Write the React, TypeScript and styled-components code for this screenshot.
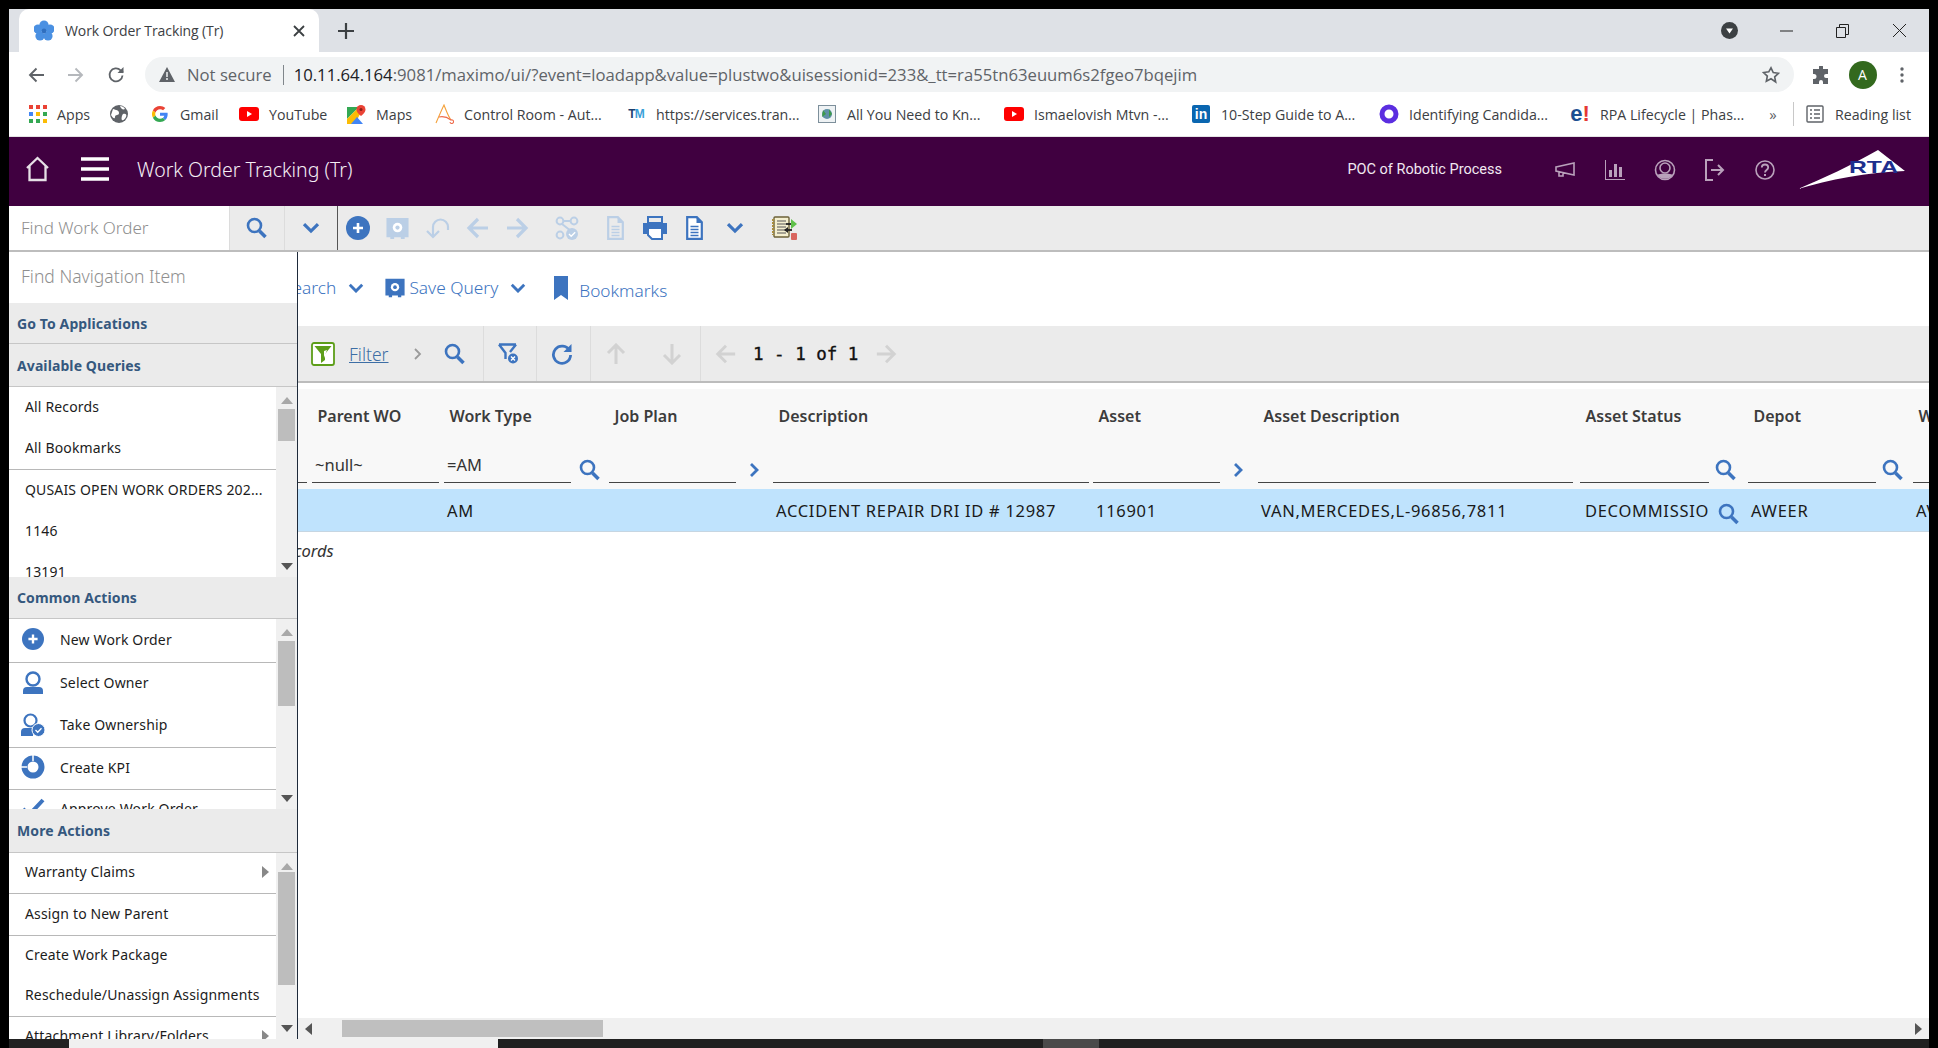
import React from "react";
import styled, { createGlobalStyle } from "styled-components";

const BLUE = "#3d74bf";
const FADE = "#bbcfe6";
const PLEX = `"Noto Sans", "Open Sans", sans-serif`;
const CHROME = `"Open Sans", "Noto Sans", sans-serif`;

const Global = createGlobalStyle`
  html, body { margin: 0; padding: 0; background: #000; overflow: hidden; }
  * { box-sizing: border-box; }
  svg { display: block; flex: none; }
`;

const Frame = styled.div`
  width: 1938px;
  height: 1048px;
  padding: 9px 9px 0;
  background: #000;
  display: flex;
  flex-direction: column;
  overflow: hidden;
`;

/* ---------- browser chrome ---------- */
const TabStrip = styled.div`
  height: 43px;
  flex: none;
  background: #dee1e6;
  display: flex;
  align-items: flex-end;
  padding-left: 10px;
`;
const Tab = styled.div`
  width: 300px;
  height: 43px;
  background: #fff;
  border-radius: 10px 10px 0 0;
  display: flex;
  align-items: center;
  padding: 0 14px 0 15px;
  font: 14px ${CHROME};
  color: #3c4043;
  letter-spacing: -0.1px;
`;
const TabTitle = styled.span`
  margin-left: 11px;
  flex: 1;
  white-space: nowrap;
`;
const NewTab = styled.div`
  width: 40px;
  height: 43px;
  margin-left: 7px;
  display: flex;
  align-items: center;
  justify-content: center;
  color: #3c4043;
`;
const WindowControls = styled.div`
  margin-left: auto;
  height: 43px;
  display: flex;
  align-items: center;
  color: #3c4043;
`;
const WinSlot = styled.div<{ $w: number }>`
  width: ${(p) => p.$w}px;
  display: flex;
  justify-content: center;
`;

const AddressRow = styled.div`
  height: 40px;
  flex: none;
  background: #fff;
  display: flex;
  align-items: flex-end;
  color: #5f6368;
`;
const NavSlot = styled.div<{ $w: number }>`
  width: ${(p) => p.$w}px;
  height: 35px;
  flex: none;
  display: flex;
  align-items: center;
  justify-content: center;
`;
const Omnibox = styled.div`
  width: 1649px;
  height: 35px;
  margin-left: 2px;
  flex: none;
  border-radius: 18px;
  background: #f1f3f4;
  display: flex;
  align-items: center;
  padding-left: 14px;
  font: 16.7px ${CHROME};
  color: #5f6368;
  white-space: nowrap;
`;
const NotSecure = styled.span`
  margin-left: 12px;
`;
const OmniSep = styled.span`
  width: 1px;
  height: 20px;
  background: #80868b;
  margin: 0 10px 0 11px;
`;
const UrlHost = styled.span`
  color: #202124;
`;
const StarSlot = styled.div`
  margin-left: auto;
  margin-right: 14px;
  color: #5f6368;
`;
const Avatar = styled.div`
  width: 28px;
  height: 28px;
  border-radius: 50%;
  background: #33691e;
  color: #fff;
  font: 14px ${CHROME};
  display: flex;
  align-items: center;
  justify-content: center;
`;

const BookmarkBar = styled.div`
  height: 45px;
  flex: none;
  background: #fff;
  display: flex;
  align-items: center;
  padding-left: 19px;
  border-bottom: 1px solid #e4e4e4;
  font: 14.2px ${CHROME};
  color: #3c4043;
  white-space: nowrap;
`;
const Bookmark = styled.div<{ $w: number; $gap?: number }>`
  width: ${(p) => p.$w}px;
  flex: none;
  display: flex;
  align-items: center;
  gap: ${(p) => p.$gap ?? 10}px;
`;
const IconBox = styled.div`
  width: 20px;
  height: 20px;
  flex: none;
  display: flex;
  align-items: center;
  justify-content: center;
`;
const TmMark = styled.span`
  font: 700 12px "Liberation Sans", sans-serif;
  letter-spacing: -1px;
  color: #1d3f6e;
`;
const TmBlue = styled.span`
  color: #3aa0d8;
`;
const InMark = styled.span`
  width: 18px;
  height: 18px;
  background: #0a66b0;
  color: #fff;
  font: 700 14px/18px "Liberation Sans", sans-serif;
  text-align: center;
  border-radius: 2px;
`;
const EMark = styled.span`
  font: 700 22px/20px "Liberation Sans", sans-serif;
  color: #1d4f91;
`;
const EBang = styled.span`
  color: #e53935;
`;
const MoreChevrons = styled.span`
  width: 20px;
  text-align: center;
  font-size: 15px;
  color: #5f6368;
`;
const BarSep = styled.span`
  width: 1px;
  height: 24px;
  background: #c8c8c8;
  margin: 0 11px 0 10px;
`;

/* ---------- maximo header ---------- */
const AppHeader = styled.div`
  height: 69px;
  flex: none;
  background: #400040;
  display: flex;
  align-items: center;
  color: #fff;
`;
const HomeSlot = styled.div`
  margin-left: 16px;
  margin-bottom: 6px;
`;
const BurgerSlot = styled.div`
  margin-left: 31px;
  margin-bottom: 6px;
`;
const AppTitle = styled.div`
  margin-left: 28px;
  font: 300 19.5px ${PLEX};
  margin-bottom: 4px;
  color: #f5eef5;
  white-space: nowrap;
`;
const OrgName = styled.div`
  margin-left: auto;
  margin-right: 38px;
  margin-bottom: 4px;
  font: 14.5px Roboto, sans-serif;
  color: #f1e8f1;
  white-space: nowrap;
`;
const HeadIcons = styled.div`
  display: flex;
  align-items: center;
  gap: 0;
  color: #b9a1bb;
  margin-bottom: 4px;
`;
const HeadSlot = styled.div`
  width: 50px;
  display: flex;
  justify-content: center;
`;
const LogoSlot = styled.div`
  margin-left: 8px;
  margin-right: 23px;
  margin-bottom: 4px;
`;
const LogoText = styled.text`
  font: 700 17px "Liberation Sans", sans-serif;
  fill: #1d2f8e;
`;

/* ---------- app toolbar ---------- */
const AppToolbar = styled.div`
  height: 46px;
  flex: none;
  background: #ebebeb;
  border-bottom: 2px solid #bdbdbd;
  display: flex;
  align-items: center;
`;
const FindBox = styled.div`
  width: 220px;
  height: 44px;
  background: #fff;
  padding: 0 0 2px 12px;
  display: flex;
  align-items: center;
  font: 300 17px ${PLEX};
  color: #8e8e8e;
  flex: none;
`;
const ToolCell = styled.div<{ $w: number; $line?: string }>`
  width: ${(p) => p.$w}px;
  height: 44px;
  flex: none;
  display: flex;
  align-items: center;
  justify-content: center;
  padding-right: 1px;
  border-left: 1px solid #dcdcdc;
  border-right: ${(p) => (p.$line ? `1px solid ${p.$line}` : "none")};
`;
const ToolIcon = styled.div<{ $w: number }>`
  width: ${(p) => p.$w}px;
  flex: none;
  display: flex;
  justify-content: center;
`;
const ToolIcons = styled.div`
  display: flex;
  align-items: center;
`;

/* ---------- workspace ---------- */
const Workspace = styled.div`
  position: relative;
  flex: 1;
  min-height: 0;
  background: #fff;
  overflow: hidden;
`;
const Main = styled.div`
  height: 100%;
  display: flex;
  flex-direction: column;
`;
const QueryBar = styled.div`
  height: 74px;
  flex: none;
  display: flex;
  align-items: center;
  padding: 0 0 2px 189px;
  font: 300 17.3px ${PLEX};
  color: ${BLUE};
  white-space: nowrap;
`;
const QueryLabel = styled.span<{ $drop?: number }>`
  position: relative;
  top: ${(p) => p.$drop ?? -1}px;
  margin-left: ${(p) => (p.$drop ? 11 : 4)}px;
`;
const QueryIcon = styled.div<{ $ml: number }>`
  margin-left: ${(p) => p.$ml}px;
`;

const FilterBar = styled.div`
  height: 57px;
  flex: none;
  background: #ebebeb;
  border-bottom: 2px solid #bcbcbc;
  display: flex;
  align-items: stretch;
  padding-left: 302px;
`;
const FilterGroup = styled.div<{ $w: number; $pl?: number; $end?: boolean }>`
  width: ${(p) => p.$w}px;
  flex: none;
  display: flex;
  align-items: center;
  padding-left: ${(p) => p.$pl ?? 0}px;
  border-right: ${(p) => (p.$end ? "none" : "1px solid #dcdcdc")};
`;
const FilterLink = styled.span`
  margin-left: 14px;
  margin-right: 25px;
  font: 300 17.5px ${PLEX};
  color: #3d6ea5;
  text-decoration: underline;
`;
const FilterChevron = styled.div`
  margin-right: 22px;
  color: #9a9a9a;
`;
const Pager = styled.span`
  margin: 0 17px 0 16px;
  font: 500 17.5px "DejaVu Sans Mono", monospace;
  -webkit-text-stroke: 0.35px #111;
  color: #111;
  white-space: nowrap;
`;
const GroupGap = styled.div<{ $w: number }>`
  width: ${(p) => p.$w}px;
  flex: none;
`;

const TableScroll = styled.div`
  flex: 1;
  min-height: 0;
  margin-top: 6px;
  display: flex;
  flex-direction: column;
  overflow: hidden;
`;
const HeadBlock = styled.div`
  height: 100px;
  flex: none;
  background: #f8f8f8;
`;
const ColGrid = styled.div<{ $h: number }>`
  height: ${(p) => p.$h}px;
  display: grid;
  grid-template-columns: 289px 14px 132px 165px 164px 320px 165px 322px 168px 165px 200px;
`;
const HeadCell = styled.div`
  padding: 0 0 2px 5.5px;
  display: flex;
  align-items: center;
  height: 55px;
  font: 600 16px ${PLEX};
  color: #3c3c3c;
  white-space: nowrap;
`;
const FilterCell = styled.div<{ $line: number }>`
  position: relative;
  height: 45px;
  padding: 0 0 4px 3px;
  display: flex;
  align-items: center;
  font: 16.5px ${PLEX};
  color: #333;
  &::after {
    content: "";
    position: absolute;
    left: 0;
    bottom: 6px;
    height: 1px;
    width: ${(p) => p.$line}px;
    background: #444;
  }
`;
const CellIcon = styled.div<{ $x: number; $y?: number }>`
  position: absolute;
  left: ${(p) => p.$x}px;
  top: ${(p) => p.$y ?? 15}px;
`;
const DataRow = styled(ColGrid)`
  flex: none;
  background: #bfe3fd;
  border-bottom: 1px solid #c6d6e2;
`;
const DataCell = styled.div<{ $dx?: number }>`
  position: relative;
  padding-left: ${(p) => p.$dx ?? 3}px;
  display: flex;
  align-items: center;
  font: 16.5px ${PLEX};
  letter-spacing: 0.7px;
  color: #1a1a1a;
  white-space: nowrap;
`;
const Clip = styled.span<{ $w: number }>`
  width: ${(p) => p.$w}px;
  overflow: hidden;
`;
const RowIcon = styled.div`
  position: absolute;
  left: 138px;
  top: 14px;
`;
const Records = styled.div`
  flex: none;
  height: 36px;
  padding-left: 254px;
  display: flex;
  align-items: center;
  font: italic 16.5px ${PLEX};
  color: #333;
`;
const Spacer = styled.div`
  flex: 1;
`;
const HScroll = styled.div`
  height: 21px;
  flex: none;
  background: #f0f0f0;
  margin-left: 289px;
  display: flex;
  align-items: center;
  padding: 0 6px 0 6px;
`;
const HThumb = styled.div`
  width: 261px;
  height: 17px;
  margin-left: 29px;
  background: #bfbfbf;
`;
const HEnd = styled.div`
  margin-left: auto;
`;

/* ---------- flyout navigation ---------- */
const Flyout = styled.nav`
  position: absolute;
  left: 0;
  top: 0;
  width: 289px;
  height: 100%;
  background: #fff;
  border-right: 1px solid #1e2a3a;
  display: flex;
  flex-direction: column;
  font: 14px ${PLEX};
  letter-spacing: 0.15px;
  color: #1c1c1c;
`;
const FlyFind = styled.div`
  height: 51px;
  flex: none;
  padding: 0 0 3px 12px;
  display: flex;
  align-items: center;
  font: 300 17.5px ${PLEX};
  letter-spacing: 0;
  color: #8f8f8f;
`;
const SectionHead = styled.div<{ $h: number }>`
  height: ${(p) => p.$h}px;
  flex: none;
  background: #ebebeb;
  border-bottom: 1px solid #c6c6c6;
  padding-left: 8px;
  display: flex;
  align-items: center;
  font: 700 14px ${PLEX};
  letter-spacing: 0.1px;
  color: #35587e;
  white-space: nowrap;
`;
const SectionBody = styled.div<{ $h: number }>`
  height: ${(p) => p.$h}px;
  flex: none;
  display: flex;
`;
const RowList = styled.div`
  flex: 1;
  min-width: 0;
  overflow: hidden;
`;
const NavRow = styled.div<{ $h: number; $sep?: boolean; $pl?: number }>`
  height: ${(p) => p.$h}px;
  display: flex;
  align-items: center;
  padding: 0 4px 3px ${(p) => p.$pl ?? 16}px;
  white-space: nowrap;
  border-bottom: ${(p) => (p.$sep ? "1px solid #b8b8b8" : "none")};
`;
const NavIcon = styled.div`
  width: 24px;
  margin-right: 15px;
  display: flex;
  justify-content: center;
`;
const SubArrow = styled.div`
  margin-left: auto;
  margin-right: 2px;
`;
const VScroll = styled.div`
  width: 21px;
  flex: none;
  background: #f0f0f0;
  display: flex;
  flex-direction: column;
  align-items: center;
  padding: 9px 0 6px;
`;
const VThumb = styled.div<{ $top: number; $h: number }>`
  width: 17px;
  height: ${(p) => p.$h}px;
  margin-top: ${(p) => p.$top}px;
  background: #bdbdbd;
`;
const ArrowEnd = styled.div`
  margin-top: auto;
`;

const TaskStrip = styled.div`
  height: 9px;
  flex: none;
  margin: 0 -9px;
  display: flex;
  background: #000;
`;
const TaskPart = styled.div<{ $w: number; $c: string }>`
  width: ${(p) => p.$w}px;
  flex: none;
  background: ${(p) => p.$c};
`;

/* ---------- icons ---------- */
type IP = { c?: string; s?: number };
const Search = ({ c = BLUE, s = 22 }: IP) => (
  <svg width={s} height={s} viewBox="0 0 22 22" fill="none">
    <circle cx="8.5" cy="8.5" r="6.5" stroke={c} strokeWidth="2.6" />
    <path d="M13.5 14l6 6" stroke={c} strokeWidth="3.6" />
  </svg>
);
const Chevron = ({ c = BLUE, w = 18 }: IP & { w?: number }) => (
  <svg width={w} height={w * 0.62} viewBox="0 0 18 11" fill="none">
    <path d="M2 2l7 7 7-7" stroke={c} strokeWidth="3.2" />
  </svg>
);
const ChevronR = ({ c = BLUE }: IP) => (
  <svg width="10" height="16" viewBox="0 0 10 16" fill="none">
    <path d="M2 2l6 6-6 6" stroke={c} strokeWidth="2.8" />
  </svg>
);
const PlusCircle = ({ s = 24 }: IP) => (
  <svg width={s} height={s} viewBox="0 0 24 24">
    <circle cx="12" cy="12" r="12" fill={BLUE} />
    <path d="M12 7v10M7 12h10" stroke="#fff" strokeWidth="2.6" />
  </svg>
);
const Safe = ({ c = FADE, w = 23 }: IP & { w?: number }) => (
  <svg width={w} height={w} viewBox="0 0 23 24">
    <path d="M0 1h23v20h-4v2h-4v-2H8v2H4v-2H0z" fill={c} />
    <circle cx="11.5" cy="11" r="5" fill="#fff" />
    <circle cx="11.5" cy="11" r="2.2" fill={c} />
  </svg>
);
const Undo = () => (
  <svg width="24" height="24" viewBox="0 0 24 24" fill="none">
    <path d="M7 20V11a7.5 7.5 0 1 1 15 0v3" stroke={FADE} strokeWidth="2.2" />
    <path d="M1 15l6 6 6-6" stroke={FADE} strokeWidth="2.2" />
  </svg>
);
const ArrowH = ({ dir, c = FADE, s = 24 }: IP & { dir: "l" | "r" }) => (
  <svg width={s} height={s} viewBox="0 0 24 24" fill="none">
    <path d={dir === "l" ? "M22 12H4M12 3l-9 9 9 9" : "M2 12h18M12 3l9 9-9 9"} stroke={c} strokeWidth="3.2" />
  </svg>
);
const ArrowV = ({ dir }: { dir: "u" | "d" }) => (
  <svg width="20" height="22" viewBox="0 0 20 22" fill="none">
    <path d={dir === "u" ? "M10 21V3M2 10l8-8 8 8" : "M10 1v18M2 12l8 8 8-8"} stroke="#d2d2d2" strokeWidth="3" />
  </svg>
);
const Route = () => (
  <svg width="24" height="24" viewBox="0 0 24 24" fill="none">
    <circle cx="5" cy="5" r="3.4" stroke={FADE} strokeWidth="2" />
    <circle cx="19" cy="5" r="3.4" stroke={FADE} strokeWidth="2" />
    <circle cx="5" cy="19" r="3.4" stroke={FADE} strokeWidth="2" />
    <path d="M8.5 5h7M7 8l9 7" stroke={FADE} strokeWidth="2" />
    <circle cx="17" cy="18" r="6" fill={FADE} />
    <path d="M14 18l2.2 2.2 4-4" stroke="#fff" strokeWidth="1.4" />
  </svg>
);
const Doc = ({ c = FADE }: IP) => (
  <svg width="17" height="24" viewBox="0 0 17 24" fill="none">
    <path d="M1.2 1.2h9.6l5 5v16.6H1.2z" stroke={c} strokeWidth="2.2" fill={c === BLUE ? "#fff" : "none"} />
    <path d="M10.5 1v6h6" fill={c} />
    <path d="M4.5 10.5h8M4.5 13.5h8M4.5 16.5h8M4.5 19.5h8" stroke={c} strokeWidth="1.6" />
  </svg>
);
const Printer = () => (
  <svg width="24" height="24" viewBox="0 0 24 24">
    <path d="M5 1h14v6H5z" fill="none" stroke={BLUE} strokeWidth="2" />
    <path d="M0 7h24v11h-4V12H4v6H0z" fill={BLUE} />
    <path d="M5 12h14v11H9l-4-4z" fill="#fff" stroke={BLUE} strokeWidth="2" />
  </svg>
);
const LedgerMove = () => (
  <svg width="26" height="25" viewBox="0 0 26 25">
    <rect x="2" y="1" width="15" height="20" rx="1" fill="#f4efd0" stroke="#6c6238" strokeWidth="1.4" />
    <path d="M1 3v16" stroke="#a98d3d" strokeWidth="2" strokeDasharray="2 1" />
    <path d="M5 5h9M5 8h9M5 11h9M5 14h9M5 17h9" stroke="#555" strokeWidth="1.2" />
    <path d="M14 8h6" stroke="#222" strokeWidth="1.8" />
    <path d="M19 3l6 5-6 5z" fill="#5fc04a" />
    <path d="M20 14h-7" stroke="#222" strokeWidth="1.8" />
    <path d="M16 11l-4 3 4 3z" fill="#222" />
    <rect x="19" y="17" width="6" height="7" rx="1" fill="#d9655f" />
  </svg>
);
const FilterGreen = () => (
  <svg width="24" height="24" viewBox="0 0 24 24">
    <rect x="1" y="1" width="22" height="22" rx="2" fill="#fff" stroke="#5d9e19" strokeWidth="1.8" />
    <path d="M3.5 4h17l-6.5 8v6l-4 3v-9z" fill="#5d9e19" />
    <path d="M13 9l3-1-3 8z" fill="#fff" />
  </svg>
);
const FilterClear = () => (
  <svg width="22" height="22" viewBox="0 0 22 22" fill="none">
    <path d="M1 1.5h17M1 1.5l6.5 8.5v6M18 1.5L12 9" stroke={BLUE} strokeWidth="2.4" />
    <circle cx="15" cy="15.5" r="5" fill={BLUE} />
    <path d="M13 13.5l4 4M17 13.5l-4 4" stroke="#fff" strokeWidth="1.4" />
  </svg>
);
const Refresh = () => (
  <svg width="22" height="22" viewBox="0 0 22 22" fill="none">
    <path d="M18.5 7.5A8.6 8.6 0 1 0 19.6 12" stroke={BLUE} strokeWidth="2.8" />
    <path d="M20.5 1v8h-8z" fill={BLUE} />
  </svg>
);
const Bookmarked = () => (
  <svg width="14" height="24" viewBox="0 0 14 24">
    <path d="M0 0h14v24l-7-5-7 5z" fill={BLUE} />
  </svg>
);
const Tri = ({ d, c = "#555" }: { d: "u" | "d" | "l" | "r"; c?: string }) => {
  const p = { u: "M0 8L6 1l6 7z", d: "M0 1h12L6 8z", l: "M8 0v12L1 6z", r: "M1 0v12l7-6z" }[d];
  const w = d === "u" || d === "d" ? 12 : 9;
  const h = d === "u" || d === "d" ? 9 : 12;
  return (
    <svg width={w} height={h} viewBox={`0 0 ${w} ${h}`}>
      <path d={p} fill={c} />
    </svg>
  );
};
const Person = () => (
  <svg width="22" height="24" viewBox="0 0 22 24" fill="none">
    <circle cx="11" cy="8" r="6.5" stroke={BLUE} strokeWidth="2.4" />
    <path d="M1 23v-3a4 4 0 0 1 4-4h12a4 4 0 0 1 4 4v3z" fill={BLUE} />
  </svg>
);
const PersonCheck = () => (
  <svg width="24" height="24" viewBox="0 0 24 24" fill="none">
    <circle cx="9.5" cy="7.5" r="6" stroke={BLUE} strokeWidth="2.2" />
    <path d="M0 23v-4a4 4 0 0 1 4-4h8v8z" fill={BLUE} />
    <circle cx="17.5" cy="17" r="6.5" fill={BLUE} stroke="#fff" />
    <path d="M14.5 17l2.2 2.2 3.8-4" stroke="#fff" strokeWidth="1.3" />
  </svg>
);
const Donut = () => (
  <svg width="24" height="24" viewBox="0 0 24 24" fill="none">
    <circle cx="12" cy="12" r="8.5" stroke={BLUE} strokeWidth="6" />
    <path d="M0 12h6M12 0v6" stroke="#fff" strokeWidth="1.5" />
  </svg>
);
const Approve = () => (
  <svg width="24" height="24" viewBox="0 0 24 24" fill="none">
    <path d="M2 12l6 6L22 3" stroke={BLUE} strokeWidth="4" />
  </svg>
);

const Flower = () => (
  <svg width="20" height="22" viewBox="0 0 20 22">
    {[[10, 5], [4, 9], [16, 9], [6, 16], [14, 16]].map(([x, y]) => (
      <circle key={`${x}${y}`} cx={x} cy={y} r="4.6" fill="#4a90e2" />
    ))}
    <circle cx="10" cy="11" r="2.4" fill="#2f6fc0" />
  </svg>
);
const AppsGrid = () => (
  <svg width="18" height="18" viewBox="0 0 18 18">
    {["#ea4335", "#ea4335", "#ea4335", "#4285f4", "#fbbc05", "#34a853", "#34a853", "#34a853", "#fbbc05"].map((c, i) => (
      <rect key={i} x={(i % 3) * 7} y={Math.floor(i / 3) * 7} width="4" height="4" fill={c} />
    ))}
  </svg>
);
const Globe = () => (
  <svg width="18" height="18" viewBox="0 0 18 18">
    <circle cx="9" cy="9" r="9" fill="#5f6368" />
    <path d="M3 4c3 1 6 1 6 4s-4 1-4 4-3 0-4-2zM13 9c3-1 4 1 3 3s-3 4-4 3 0-5 1-6zM10 1c2 0 4 1 5 3-2 1-4 0-5-3z" fill="#fff" />
  </svg>
);
const GoogleG = () => (
  <svg width="16" height="16" viewBox="0 0 48 48">
    <path fill="#ea4335" d="M24 9.5c3.5 0 6.7 1.300 9.200 3.500l6.800-6.800C35.900 2.400 30.400 0 24 0 14.600 0 6.500 5.400 2.600 13.200l7.900 6.200C12.400 13.600 17.700 9.500 24 9.500z" />
    <path fill="#4285f4" d="M47 24.500c0-1.600-.1-3.100-.4-4.500H24v9h12.900c-.6 3-2.200 5.400-4.700 7.100l7.600 5.900C44.200 38 47 31.800 47 24.500z" />
    <path fill="#fbbc05" d="M10.500 28.600a14.500 14.500 0 0 1 0-9.200l-7.900-6.200a24 24 0 0 0 0 21.600z" />
    <path fill="#34a853" d="M24 48c6.500 0 11.900-2.100 15.800-5.800l-7.600-5.900c-2.100 1.400-4.900 2.300-8.200 2.300-6.300 0-11.600-4.200-13.500-9.900l-7.900 6.200C6.500 42.600 14.600 48 24 48z" />
  </svg>
);
const YouTube = () => (
  <svg width="20" height="14" viewBox="0 0 20 14">
    <rect width="20" height="14" rx="3" fill="#f00" />
    <path d="M8 4l5 3-5 3z" fill="#fff" />
  </svg>
);
const MapsPin = () => (
  <svg width="19" height="19" viewBox="0 0 19 19">
    <path d="M0 2h12l-12 12z" fill="#34a853" />
    <path d="M0 14L12 2l2 5-6 12H0z" fill="#fbbc05" />
    <path d="M4 19l6-7 6 7z" fill="#4285f4" />
    <path d="M14 0a4.500 4.500 0 0 1 4.500 4.500C18.500 8 14 11 14 11S9.500 8 9.500 4.500A4.500 4.500 0 0 1 14 0z" fill="#ea4335" />
    <circle cx="14" cy="4.500" r="1.500" fill="#8c1f16" />
  </svg>
);
const AutoA = () => (
  <svg width="19" height="20" viewBox="0 0 19 20" fill="none">
    <path d="M1 19C4 12 7 5 9 1c2 5 4 11 7 15" stroke="#f4a13a" strokeWidth="1.1" />
    <path d="M4 13c4-1 8 0 12 3a1.800 1.800 0 1 1-1 2" stroke="#ee6a4a" strokeWidth="1.1" />
  </svg>
);
const Photo = () => (
  <svg width="18" height="18" viewBox="0 0 18 18">
    <rect x=".5" y=".5" width="17" height="17" fill="#eef2f4" stroke="#7d8f9b" />
    <circle cx="9" cy="9" r="5" fill="#5f8fa6" />
    <path d="M5 5l3 4-4 3zM11 4l3 5-3 3z" fill="#3d9a4a" />
  </svg>
);
const Ring = () => (
  <svg width="20" height="20" viewBox="0 0 20 20" fill="none">
    <circle cx="10" cy="10" r="7" stroke="#5b2ee0" strokeWidth="5" />
  </svg>
);
const ListIcon = () => (
  <svg width="18" height="18" viewBox="0 0 18 18" fill="none" stroke="#5f6368" strokeWidth="1.4">
    <rect x="1" y="1" width="16" height="16" rx="1" />
    <path d="M4 5h2M8 5h6M4 9h2M8 9h6M4 13h2M8 13h6" />
  </svg>
);

const HomeIcon = () => (
  <svg width="25" height="26" viewBox="0 0 25 26" fill="none">
    <path d="M2 12L12.500 2 23 12M4.500 10v14h16V10" stroke="#e6e0e6" strokeWidth="2.300" />
  </svg>
);
const Burger = () => (
  <svg width="28" height="24" viewBox="0 0 28 24">
    <path d="M0 2h28M0 12h28M0 22h28" stroke="#fff" strokeWidth="3.400" />
  </svg>
);
const Bullhorn = () => (
  <svg width="20" height="16" viewBox="0 0 20 16" fill="none" stroke="currentColor" strokeWidth="1.600">
    <path d="M1 5l18-4v12L1 9zM4 10v4h4v-3" />
  </svg>
);
const BarsChart = () => (
  <svg width="20" height="20" viewBox="0 0 20 20" fill="currentColor">
    <path d="M0 0h1v19h19v1H0z" />
    <rect x="4" y="10" width="3" height="7" />
    <rect x="9" y="4" width="3" height="13" />
    <rect x="14" y="7" width="3" height="10" />
  </svg>
);
const UserRound = () => (
  <svg width="22" height="22" viewBox="0 0 22 22" fill="none">
    <circle cx="11" cy="11" r="9.500" stroke="currentColor" strokeWidth="1.600" />
    <circle cx="11" cy="9" r="5" stroke="currentColor" strokeWidth="1.600" />
    <path d="M3.500 16c2-2 13-2 15 0-2 5-13 5-15 0z" fill="currentColor" />
  </svg>
);
const ExitIcon = () => (
  <svg width="20" height="22" viewBox="0 0 20 22" fill="none" stroke="currentColor" strokeWidth="2">
    <path d="M8 1H1v20h7M6 11h12M13 6l5 5-5 5" />
  </svg>
);
const HelpIcon = () => (
  <svg width="20" height="20" viewBox="0 0 20 20" fill="none" stroke="currentColor" strokeWidth="1.600">
    <circle cx="10" cy="10" r="9" />
    <path d="M6.800 7.500c0-4 6.400-4 6.400 0 0 2.500-3.200 2.500-3.200 5" strokeWidth="1.800" />
    <path d="M10 14v2" strokeWidth="2" />
  </svg>
);
const RtaLogo = () => (
  <svg width="108" height="40" viewBox="0 0 108 40">
    <path d="M0 39C26 28 52 16 80 0l27 21C70 22 30 30 0 39z" fill="#fff" />
    <LogoText x="51" y="23" textLength="49" lengthAdjust="spacingAndGlyphs">RTA</LogoText>
  </svg>
);

export default function App() {
  return (
    <Frame>
      <Global />
      <TabStrip>
        <Tab>
          <IconBox><Flower /></IconBox>
          <TabTitle>Work Order Tracking (Tr)</TabTitle>
          <svg width="12" height="12" viewBox="0 0 12 12" stroke="#3c4043" strokeWidth="1.800"><path d="M1 1l10 10M11 1L1 11" /></svg>
        </Tab>
        <NewTab>
          <svg width="16" height="16" viewBox="0 0 16 16" stroke="#3c4043" strokeWidth="2.200"><path d="M8 0v16M0 8h16" /></svg>
        </NewTab>
        <WindowControls>
          <WinSlot $w={58}>
            <svg width="17" height="17" viewBox="0 0 17 17"><circle cx="8.500" cy="8.500" r="8.500" fill="#3c4043" /><path d="M5 6.500h7l-3.500 5z" fill="#fff" /></svg>
          </WinSlot>
          <WinSlot $w={56}>
            <svg width="13" height="2" viewBox="0 0 13 2"><path d="M0 1h13" stroke="#222" strokeWidth="1" /></svg>
          </WinSlot>
          <WinSlot $w={56}>
            <svg width="13" height="14" viewBox="0 0 13 14" fill="none" stroke="#222" strokeWidth="1"><path d="M.5 3.500h9v10h-9zM3.500 3.500v-3h9v10h-3" /></svg>
          </WinSlot>
          <WinSlot $w={59}>
            <svg width="15" height="15" viewBox="0 0 15 15" stroke="#222" strokeWidth="1"><path d="M1 1l13 13M14 1L1 14" /></svg>
          </WinSlot>
        </WindowControls>
      </TabStrip>

      <AddressRow>
        <NavSlot $w={54}>
          <svg width="16" height="16" viewBox="0 0 16 16" fill="none" stroke="#5f6368" strokeWidth="1.900"><path d="M16 8H2M8.500 1.500L2 8l6.500 6.500" /></svg>
        </NavSlot>
        <NavSlot $w={26}>
          <svg width="16" height="16" viewBox="0 0 16 16" fill="none" stroke="#b5b8bc" strokeWidth="1.900"><path d="M0 8h14M7.500 1.500L14 8l-6.500 6.500" /></svg>
        </NavSlot>
        <NavSlot $w={54}>
          <svg width="18" height="18" viewBox="0 0 18 18" fill="none" stroke="#5f6368" strokeWidth="1.800"><path d="M15.500 9.500a6.500 6.500 0 1 1-1.900-5.200L16 6.500" /><path d="M16.500 1v6h-6z" fill="#5f6368" stroke="none" /></svg>
        </NavSlot>
        <Omnibox>
          <svg width="16" height="15" viewBox="0 0 16 15"><path d="M8 0l8 15H0z" fill="#5f6368" /><path d="M8 5v5M8 11v2" stroke="#f1f3f4" strokeWidth="1.500" /></svg>
          <NotSecure>Not secure</NotSecure>
          <OmniSep />
          <span><UrlHost>10.11.64.164</UrlHost>:9081/maximo/ui/?event=loadapp&amp;value=plustwo&amp;uisessionid=233&amp;_tt=ra55tn63euum6s2fgeo7bqejim</span>
          <StarSlot>
            <svg width="18" height="18" viewBox="0 0 24 24" fill="none" stroke="#5f6368" strokeWidth="2.200"><path d="M12 2.500l3 6.300 6.900.9-5 4.800 1.300 6.900L12 17.100l-6.200 3.300 1.300-6.900-5-4.800 6.900-.9z" /></svg>
          </StarSlot>
        </Omnibox>
        <NavSlot $w={53}>
          <svg width="18" height="18" viewBox="0 0 18 18" fill="#5f6368"><path d="M7 1a2 2 0 0 1 4 0v2h5v5h-2a2 2 0 0 0 0 4h2v6H11v-2a2 2 0 0 0-4 0v2H1v-5h1a2.500 2.500 0 0 0 0-5H1V3h6z" /></svg>
        </NavSlot>
        <NavSlot $w={31}><Avatar>A</Avatar></NavSlot>
        <NavSlot $w={47}>
          <svg width="4" height="16" viewBox="0 0 4 16" fill="#5f6368"><circle cx="2" cy="2" r="1.700" /><circle cx="2" cy="8" r="1.700" /><circle cx="2" cy="14" r="1.700" /></svg>
        </NavSlot>
      </AddressRow>

      <BookmarkBar>
        <Bookmark $w={81} $gap={9}><IconBox><AppsGrid /></IconBox><span>Apps</span></Bookmark>
        <Bookmark $w={41}><IconBox><Globe /></IconBox></Bookmark>
        <Bookmark $w={89}><IconBox><GoogleG /></IconBox><span>Gmail</span></Bookmark>
        <Bookmark $w={107}><IconBox><YouTube /></IconBox><span>YouTube</span></Bookmark>
        <Bookmark $w={88}><IconBox><MapsPin /></IconBox><span>Maps</span></Bookmark>
        <Bookmark $w={192}><IconBox><AutoA /></IconBox><span>Control Room - Aut...</span></Bookmark>
        <Bookmark $w={191}><IconBox><TmMark>T<TmBlue>M</TmBlue></TmMark></IconBox><span>https://services.tran...</span></Bookmark>
        <Bookmark $w={187}><IconBox><Photo /></IconBox><span>All You Need to Kn...</span></Bookmark>
        <Bookmark $w={187}><IconBox><YouTube /></IconBox><span>Ismaelovish Mtvn -...</span></Bookmark>
        <Bookmark $w={188}><IconBox><InMark>in</InMark></IconBox><span>10-Step Guide to A...</span></Bookmark>
        <Bookmark $w={191}><IconBox><Ring /></IconBox><span>Identifying Candida...</span></Bookmark>
        <Bookmark $w={193}><IconBox><EMark>e<EBang>!</EBang></EMark></IconBox><span>RPA Lifecycle | Phas...</span></Bookmark>
        <MoreChevrons>»</MoreChevrons>
        <BarSep />
        <Bookmark $w={110}><IconBox><ListIcon /></IconBox><span>Reading list</span></Bookmark>
      </BookmarkBar>

      <AppHeader>
        <HomeSlot><HomeIcon /></HomeSlot>
        <BurgerSlot><Burger /></BurgerSlot>
        <AppTitle>Work Order Tracking (Tr)</AppTitle>
        <OrgName>POC of Robotic Process</OrgName>
        <HeadIcons>
          <HeadSlot><Bullhorn /></HeadSlot>
          <HeadSlot><BarsChart /></HeadSlot>
          <HeadSlot><UserRound /></HeadSlot>
          <HeadSlot><ExitIcon /></HeadSlot>
          <HeadSlot><HelpIcon /></HeadSlot>
        </HeadIcons>
        <LogoSlot><RtaLogo /></LogoSlot>
      </AppHeader>

      <AppToolbar>
        <FindBox>Find Work Order</FindBox>
        <ToolCell $w={55}><Search /></ToolCell>
        <ToolCell $w={54} $line="#555"><Chevron /></ToolCell>
        <ToolIcons>
          <ToolIcon $w={40}><PlusCircle /></ToolIcon>
          <ToolIcon $w={39}><Safe /></ToolIcon>
          <ToolIcon $w={41}><Undo /></ToolIcon>
          <ToolIcon $w={39}><ArrowH dir="l" /></ToolIcon>
          <ToolIcon $w={40}><ArrowH dir="r" /></ToolIcon>
          <ToolIcon $w={60}><Route /></ToolIcon>
          <ToolIcon $w={37}><Doc /></ToolIcon>
          <ToolIcon $w={41}><Printer /></ToolIcon>
          <ToolIcon $w={38}><Doc c={BLUE} /></ToolIcon>
          <ToolIcon $w={44}><Chevron /></ToolIcon>
          <ToolIcon $w={55}><LedgerMove /></ToolIcon>
        </ToolIcons>
      </AppToolbar>

      <Workspace>
        <Main>
          <QueryBar>
            <QueryLabel>Advanced Search</QueryLabel>
            <QueryIcon $ml={12}><Chevron w={16} /></QueryIcon>
            <QueryIcon $ml={21}><Safe c={BLUE} w={20} /></QueryIcon>
            <QueryLabel>Save Query</QueryLabel>
            <QueryIcon $ml={12}><Chevron w={16} /></QueryIcon>
            <QueryIcon $ml={28}><Bookmarked /></QueryIcon>
            <QueryLabel $drop={2}>Bookmarks</QueryLabel>
          </QueryBar>
          <FilterBar>
            <FilterGroup $w={173}>
              <FilterGreen />
              <FilterLink>Filter</FilterLink>
              <FilterChevron><svg width="8" height="12" viewBox="0 0 8 12" fill="none" stroke="#9a9a9a" strokeWidth="1.800"><path d="M1 1l5 5-5 5" /></svg></FilterChevron>
              <Search />
            </FilterGroup>
            <FilterGroup $w={53} $pl={14}><FilterClear /></FilterGroup>
            <FilterGroup $w={54} $pl={14}><Refresh /></FilterGroup>
            <FilterGroup $w={110} $pl={15}>
              <ArrowV dir="u" />
              <GroupGap $w={36} />
              <ArrowV dir="d" />
            </FilterGroup>
            <FilterGroup $w={300} $pl={14} $end>
              <ArrowH dir="l" c="#d2d2d2" s={22} />
              <Pager>1 - 1 of 1</Pager>
              <ArrowH dir="r" c="#d2d2d2" s={22} />
            </FilterGroup>
          </FilterBar>
          <TableScroll>
            <HeadBlock>
              <ColGrid $h={55}>
                <span />
                <span />
                <HeadCell>Parent WO</HeadCell>
                <HeadCell>Work Type</HeadCell>
                <HeadCell>Job Plan</HeadCell>
                <HeadCell>Description</HeadCell>
                <HeadCell>Asset</HeadCell>
                <HeadCell>Asset Description</HeadCell>
                <HeadCell>Asset Status</HeadCell>
                <HeadCell>Depot</HeadCell>
                <HeadCell>WO</HeadCell>
              </ColGrid>
              <ColGrid $h={45}>
                <span />
                <FilterCell $line={9} />
                <FilterCell $line={127}>~null~</FilterCell>
                <FilterCell $line={127}>=AM<CellIcon $x={135}><Search /></CellIcon></FilterCell>
                <FilterCell $line={127}><CellIcon $x={140} $y={18}><ChevronR /></CellIcon></FilterCell>
                <FilterCell $line={316} />
                <FilterCell $line={127}><CellIcon $x={140} $y={18}><ChevronR /></CellIcon></FilterCell>
                <FilterCell $line={315} />
                <FilterCell $line={129}><CellIcon $x={135}><Search /></CellIcon></FilterCell>
                <FilterCell $line={128}><CellIcon $x={134}><Search /></CellIcon></FilterCell>
                <FilterCell $line={40} />
              </ColGrid>
            </HeadBlock>
            <DataRow $h={43}>
              <span />
              <span />
              <span />
              <DataCell>AM</DataCell>
              <span />
              <DataCell>ACCIDENT REPAIR DRI ID # 12987</DataCell>
              <DataCell>116901</DataCell>
              <DataCell>VAN,MERCEDES,L-96856,7811</DataCell>
              <DataCell $dx={5}><Clip $w={124}>DECOMMISSIONED</Clip><RowIcon><Search /></RowIcon></DataCell>
              <DataCell>AWEER</DataCell>
              <DataCell>AV</DataCell>
            </DataRow>
            <Records>1 Records</Records>
            <Spacer />
            <HScroll>
              <Tri d="l" />
              <HThumb />
              <HEnd><Tri d="r" /></HEnd>
            </HScroll>
          </TableScroll>
        </Main>

        <Flyout>
          <FlyFind>Find Navigation Item</FlyFind>
          <SectionHead $h={41}>Go To Applications</SectionHead>
          <SectionHead $h={43}>Available Queries</SectionHead>
          <SectionBody $h={190}>
            <RowList>
              <NavRow $h={41}>All Records</NavRow>
              <NavRow $h={42} $sep>All Bookmarks</NavRow>
              <NavRow $h={41}>QUSAIS OPEN WORK ORDERS 202...</NavRow>
              <NavRow $h={41}>1146</NavRow>
              <NavRow $h={41}>13191</NavRow>
            </RowList>
            <VScroll>
              <Tri d="u" c="#a8a8a8" />
              <VThumb $top={4} $h={32} />
              <ArrowEnd><Tri d="d" /></ArrowEnd>
            </VScroll>
          </SectionBody>
          <SectionHead $h={42}>Common Actions</SectionHead>
          <SectionBody $h={190}>
            <RowList>
              <NavRow $h={44} $sep $pl={12}><NavIcon><PlusCircle s={22} /></NavIcon>New Work Order</NavRow>
              <NavRow $h={42} $pl={12}><NavIcon><Person /></NavIcon>Select Owner</NavRow>
              <NavRow $h={43} $sep $pl={12}><NavIcon><PersonCheck /></NavIcon>Take Ownership</NavRow>
              <NavRow $h={42} $sep $pl={12}><NavIcon><Donut /></NavIcon>Create KPI</NavRow>
              <NavRow $h={40} $pl={12}><NavIcon><Approve /></NavIcon>Approve Work Order</NavRow>
            </RowList>
            <VScroll>
              <Tri d="u" c="#a8a8a8" />
              <VThumb $top={4} $h={65} />
              <ArrowEnd><Tri d="d" /></ArrowEnd>
            </VScroll>
          </SectionBody>
          <SectionHead $h={44}>More Actions</SectionHead>
          <SectionBody $h={186}>
            <RowList>
              <NavRow $h={41} $sep>Warranty Claims<SubArrow><Tri d="r" c="#888" /></SubArrow></NavRow>
              <NavRow $h={42} $sep>Assign to New Parent</NavRow>
              <NavRow $h={40}>Create Work Package</NavRow>
              <NavRow $h={41} $sep>Reschedule/Unassign Assignments</NavRow>
              <NavRow $h={40}>Attachment Library/Folders<SubArrow><Tri d="r" c="#888" /></SubArrow></NavRow>
            </RowList>
            <VScroll>
              <Tri d="u" c="#a8a8a8" />
              <VThumb $top={1} $h={113} />
              <ArrowEnd><Tri d="d" /></ArrowEnd>
            </VScroll>
          </SectionBody>
        </Flyout>
      </Workspace>
      <TaskStrip>
        <TaskPart $w={9} $c="#000" />
        <TaskPart $w={60} $c="#222" />
        <TaskPart $w={429} $c="#f0f0f0" />
        <TaskPart $w={545} $c="#202020" />
        <TaskPart $w={56} $c="#4a4a4a" />
        <TaskPart $w={830} $c="#202020" />
      </TaskStrip>
    </Frame>
  );
}
